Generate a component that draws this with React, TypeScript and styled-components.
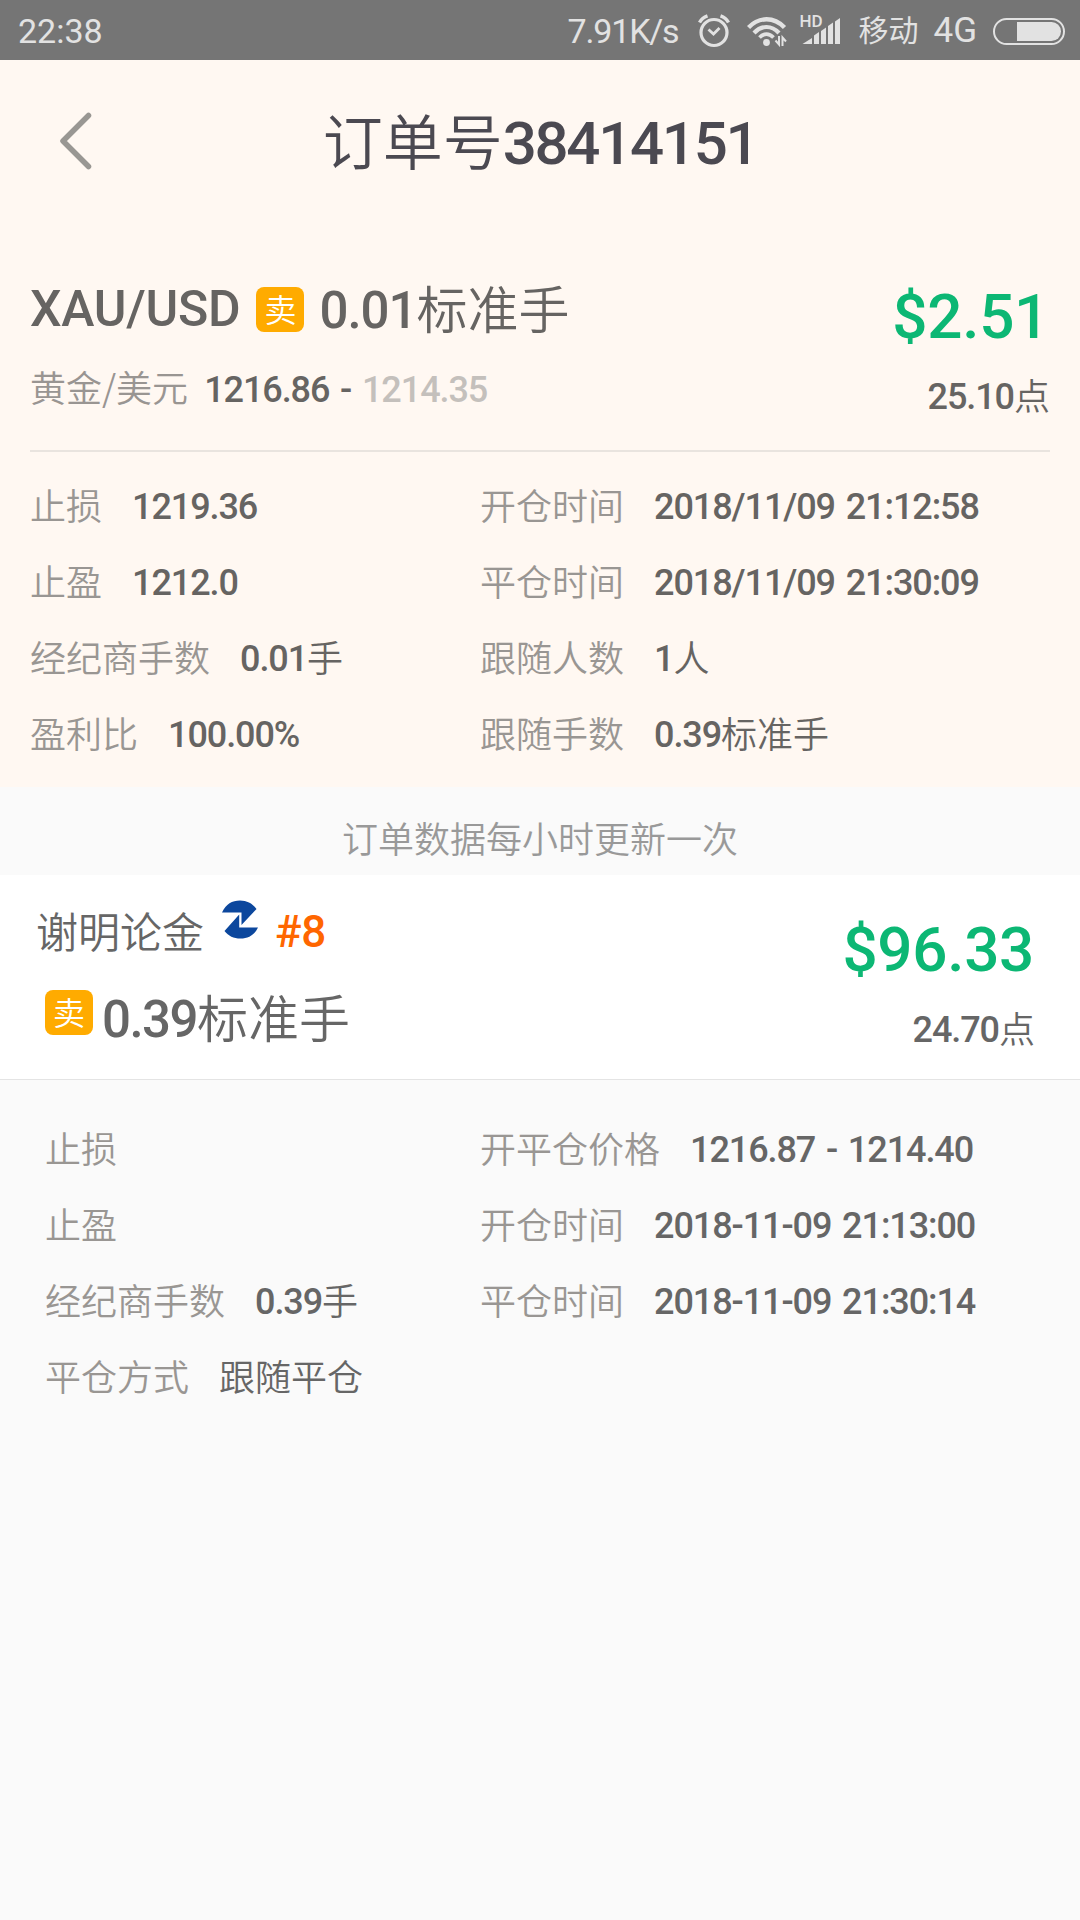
import React from 'react'
import styled, { createGlobalStyle } from 'styled-components'

type Field = {
  label: string,
  num?: string,
  unit?: string,
}

const leaderLeft: Field[] = [
  { label: '止损', num: '1219.36' },
  { label: '止盈', num: '1212.0' },
  { label: '经纪商手数', num: '0.01', unit: '手' },
  { label: '盈利比', num: '100.00%' },
]

const leaderRight: Field[] = [
  { label: '开仓时间', num: '2018/11/09 21:12:58' },
  { label: '平仓时间', num: '2018/11/09 21:30:09' },
  { label: '跟随人数', num: '1', unit: '人' },
  { label: '跟随手数', num: '0.39', unit: '标准手' },
]

const followerLeft: Field[] = [
  { label: '止损' },
  { label: '止盈' },
  { label: '经纪商手数', num: '0.39', unit: '手' },
  { label: '平仓方式', unit: '跟随平仓' },
]

const followerRight: Field[] = [
  { label: '开平仓价格', num: '1216.87 - 1214.40' },
  { label: '开仓时间', num: '2018-11-09 21:13:00' },
  { label: '平仓时间', num: '2018-11-09 21:30:14' },
]

const GlobalStyle = createGlobalStyle`
  * {
    box-sizing: border-box;
  }

  body {
    margin: 0;
    background: #fafafa;
  }
`

const Page = styled.div`
  width: 1080px;
  height: 1920px;
  overflow: hidden;
  background: #fafafa;
  color: #666462;
  font-family: 'Noto Sans CJK SC', sans-serif;
  font-weight: 350;
  font-size: 36px;
  white-space: nowrap;
`

const Num = styled.span`
  font-family: Roboto, sans-serif;
  font-weight: 500;
  letter-spacing: -0.03em;
  word-spacing: 0.08em;
  vertical-align: 0.02em;
  white-space: pre;
`

const StatusBar = styled.div`
  display: flex;
  align-items: center;
  height: 60px;
  padding: 2px 15px 0 18px;
  background: #757575;
  color: #e2e2e2;
  font-family: Roboto, 'Noto Sans CJK SC', sans-serif;
  font-weight: 400;
  font-size: 34px;
  line-height: 58px;
`

const Clock = styled.span`
  flex: 1;
`

const Speed = styled.span`
  letter-spacing: -0.035em;
`

const StatusIcon = styled.span<{ $gap: number }>`
  position: relative;
  display: flex;
  margin-left: ${p => p.$gap}px;
`

const HdMark = styled.span`
  position: absolute;
  left: -2px;
  top: -5px;
  font-weight: 500;
  font-size: 17px;
  line-height: 17px;
`

const Carrier = styled.span`
  margin-left: 17px;
  font-weight: 400;
  font-size: 30px;
`

const Network = styled.span`
  margin: 0 16px 0 15px;
  font-size: 35px;
`

const Leader = styled.section`
  height: 727px;
  background: #fff8f2;
`

const Header = styled.header`
  display: grid;
  grid-template-columns: 120px 1fr 120px;
  align-items: center;
  height: 162px;
`

const BackButton = styled.button`
  display: flex;
  padding: 0 0 0 59px;
  border: none;
  background: none;
`

const Title = styled.h1`
  margin: 0;
  color: #4b4951;
  font-weight: 350;
  font-size: 60px;
  line-height: 88px;
  text-align: center;

  ${Num} {
    letter-spacing: -0.038em;
  }
`

const Summary = styled.div`
  display: flex;
  justify-content: space-between;
  height: 230px;
  margin: 0 30px;
  padding-top: 50px;
  border-bottom: 2px solid #e9e4df;
`

const SymbolRow = styled.div`
  display: flex;
  align-items: center;
  height: 74px;
`

const PairSymbol = styled(Num)`
  font-size: 50px;
  letter-spacing: -0.005em;
`

const SellBadge = styled.span`
  width: 48px;
  height: 45px;
  margin: 0 15px 0 16px;
  border-radius: 8px;
  background: #ffab00;
  color: #fff;
  font-size: 32px;
  line-height: 43px;
  text-align: center;
`

const Lots = styled.span`
  font-size: 51px;
  line-height: 72px;

  ${Num} {
    letter-spacing: -0.02em;
  }
`

const PriceRow = styled.div`
  display: flex;
  align-items: baseline;
  gap: 16px;
  margin-top: 13px;
  line-height: 54px;
`

const PairName = styled.span`
  color: #999592;
`

const ClosePrice = styled.span`
  color: #c4c0bc;
`

const Result = styled.div`
  display: flex;
  flex-direction: column;
  align-items: flex-end;
`

const Profit = styled(Num)`
  padding: 3px 1px 0 0;
  color: #0cb774;
  font-size: 62px;
  letter-spacing: -0.005em;
  line-height: 84px;
`

const Points = styled.span`
  margin-top: 8px;
  font-size: 36px;
  line-height: 54px;
`

const Details = styled.div<{ $indent: number }>`
  display: grid;
  grid-template-columns: ${p => 480 - p.$indent}px 1fr;
  padding: 14px 0 0 ${p => p.$indent}px;
`

const Column = styled.div`
  display: flex;
  flex-direction: column;
`

const FieldRow = styled.div`
  display: flex;
  align-items: baseline;
  gap: 30px;
  height: 76px;
  line-height: 76px;
`

const Label = styled.span`
  color: #999693;
`

const Notice = styled.div`
  height: 88px;
  color: #999;
  line-height: 100px;
  text-align: center;
`

const Follower = styled.section`
  display: flex;
  justify-content: space-between;
  height: 205px;
  padding: 30px 45px 0 36px;
  border-bottom: 1px solid #e4e4e4;
  background: #fff;
  color: #666;
`

const NameRow = styled.div`
  display: flex;
  align-items: center;
  height: 54px;

  svg {
    margin: -26px 17px 0 18px;
  }
`

const Name = styled.span`
  padding-bottom: 4px;
  font-size: 42px;
  line-height: 54px;
`

const Rank = styled(Num)`
  color: #ff6600;
  font-size: 44px;
  letter-spacing: -0.005em;
`

const FollowRow = styled.div`
  display: flex;
  align-items: flex-start;
  margin-top: 31px;

  ${SellBadge} {
    margin: 0 9px;
  }
`

const FollowLots = styled.span`
  font-size: 51px;
  line-height: 53px;
`

const FollowerDetails = styled.section`
  padding-top: 15px;
  color: #666;
`

const AlarmIcon = () => (
  <svg width="32" height="34" viewBox="0 0 32 34" fill="none" stroke="#e2e2e2">
    <circle cx="16" cy="18.5" r="13" strokeWidth="3.2" />
    <path d="M1.5 8.5C3 5.5 6 3 9.5 1.8M30.5 8.5C29 5.5 26 3 22.5 1.8" strokeWidth="3.4" />
    <path d="M10.5 15.5L15.5 20L21.5 14" strokeWidth="2.8" />
  </svg>
)

const WifiIcon = () => (
  <svg width="40" height="31" viewBox="0 0 40 31" fill="none" stroke="#e2e2e2">
    <path d="M1.5 11.5C12 0.5 27 0.5 37.5 11.5" strokeWidth="4.4" />
    <path d="M7 17C14.5 9 24.5 9 32 17" strokeWidth="4.2" />
    <path d="M12.5 21.5C17 17 22 17 26.5 21.5" strokeWidth="3.8" />
    <circle cx="19.5" cy="26.5" r="3.4" fill="#e2e2e2" stroke="none" />
    <path d="M32 20V28.5L28.5 24.5M35.5 30V21.5L39 25.5" strokeWidth="2" />
  </svg>
)

const SignalIcon = () => (
  <svg width="40" height="27" viewBox="0 0 40 27" fill="#e2e2e2">
    <path d="M1.5 26L11 20V26Z" />
    <path d="M13 17.5L18 14V26H13Z" />
    <path d="M20 13L25 9.5V26H20Z" />
    <path d="M27 8L32 4.5V26H27Z" />
    <path d="M34 3.500L39 0V26H34Z" />
  </svg>
)

const BatteryIcon = () => (
  <svg width="72" height="27" viewBox="0 0 72 27">
    <rect x="1" y="1" width="70" height="25" rx="12.5" fill="none" stroke="#e2e2e2" strokeWidth="2" />
    <path d="M24 4H58.5A9.5 9.5 0 0 1 58.5 23H24Z" fill="#e2e2e2" />
  </svg>
)

const BackIcon = () => (
  <svg width="34" height="60" viewBox="0 0 34 60" fill="none" stroke="#999793" strokeWidth="5.5" strokeLinecap="round" strokeLinejoin="round">
    <path d="M29.5 4.5L4 30L29.5 55.5" />
  </svg>
)

const BrokerLogo = () => (
  <svg width="36" height="39" viewBox="0 0 36 39" fill="#0c479d">
    <path d="M0 12.5C4 4 10 0.5 18 0.5C25 0.5 30.5 3.5 34.5 9L19.5 25V12.5Z" />
    <path d="M36 27.5C32.5 35 26.5 38.5 18.5 38.5C11.5 38.5 6.5 36 2.5 31L17.2 14.5V27.5Z" />
  </svg>
)

const FieldList = ({ fields }: { fields: Field[] }) => (
  <Column>
    {fields.map((field) => (
      <FieldRow key={field.label}>
        <Label>{field.label}</Label>
        <span>
          {field.num && <Num>{field.num}</Num>}
          {field.unit}
        </span>
      </FieldRow>
    ))}
  </Column>
)

export default function App() {
  return (
    <Page>
      <GlobalStyle />
      <StatusBar>
        <Clock>22:38</Clock>
        <Speed>7.91K/s</Speed>
        <StatusIcon $gap={20}><AlarmIcon /></StatusIcon>
        <StatusIcon $gap={17}><WifiIcon /></StatusIcon>
        <StatusIcon $gap={14}>
          <SignalIcon />
          <HdMark>HD</HdMark>
        </StatusIcon>
        <Carrier>移动</Carrier>
        <Network>4G</Network>
        <BatteryIcon />
      </StatusBar>

      <Leader>
        <Header>
          <BackButton aria-label="返回">
            <BackIcon />
          </BackButton>
          <Title>订单号<Num>38414151</Num></Title>
        </Header>

        <Summary>
          <div>
            <SymbolRow>
              <PairSymbol>XAU/USD</PairSymbol>
              <SellBadge>卖</SellBadge>
              <Lots><Num>0.01</Num>标准手</Lots>
            </SymbolRow>
            <PriceRow>
              <PairName>黄金/美元</PairName>
              <Num>1216.86 - <ClosePrice>1214.35</ClosePrice></Num>
            </PriceRow>
          </div>
          <Result>
            <Profit>$2.51</Profit>
            <Points><Num>25.10</Num>点</Points>
          </Result>
        </Summary>

        <Details $indent={30}>
          <FieldList fields={leaderLeft} />
          <FieldList fields={leaderRight} />
        </Details>
      </Leader>

      <Notice>订单数据每小时更新一次</Notice>

      <Follower>
        <div>
          <NameRow>
            <Name>谢明论金</Name>
            <BrokerLogo />
            <Rank>#8</Rank>
          </NameRow>
          <FollowRow>
            <SellBadge>卖</SellBadge>
            <FollowLots><Num>0.39</Num>标准手</FollowLots>
          </FollowRow>
        </div>
        <Result>
          <Profit>$96.33</Profit>
          <Points><Num>24.70</Num>点</Points>
        </Result>
      </Follower>

      <FollowerDetails>
        <Details $indent={45}>
          <FieldList fields={followerLeft} />
          <FieldList fields={followerRight} />
        </Details>
      </FollowerDetails>
    </Page>
  )
}
